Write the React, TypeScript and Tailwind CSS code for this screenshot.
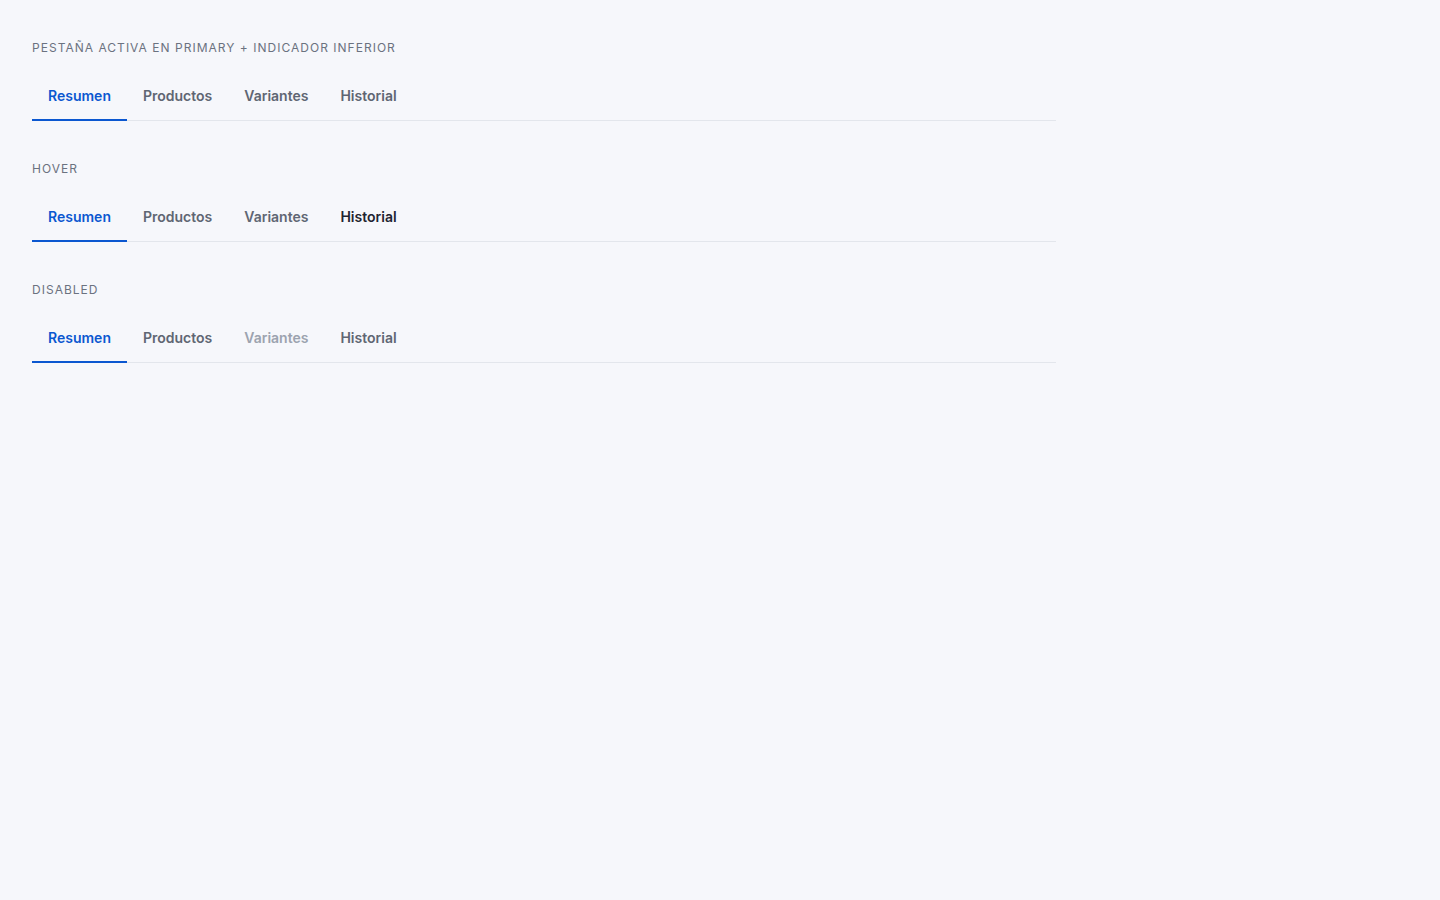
const tabs = ["Resumen", "Productos", "Variantes", "Historial"];

interface TabRowProps {
  label: string;
  hovered?: string;
  disabled?: string;
}

function TabRow({ label, hovered, disabled }: TabRowProps) {
  return (
    <section className="flex flex-col">
      <p className="mb-5 pt-px text-xs leading-4 tracking-[0.085em] uppercase text-[#6b7280]">
        {label}
      </p>
      <div className="flex border-b border-[#e3e6ec]">
        {tabs.map((tab, i) => {
          const active = i === 0;
          let color = "text-[#5f6673] border-transparent";
          if (active) color = "text-[#0b57d0] border-[#0b57d0]";
          else if (tab === hovered) color = "text-[#1f2430] border-transparent";
          else if (tab === disabled) color = "text-[#9ca3af] border-transparent";
          return (
            <button
              key={tab}
              disabled={tab === disabled}
              className={`-mb-px border-b-2 px-4 pt-[10px] pb-[13px] text-sm leading-5 font-semibold ${color}`}
            >
              {tab}
            </button>
          );
        })}
      </div>
    </section>
  );
}

export default function App() {
  return (
    <div
      className="min-h-screen bg-[#f6f7fb] px-8 pt-[39px]"
      style={{ fontFamily: "Inter, 'Noto Sans', sans-serif" }}
    >
      <div className="flex w-[1024px] flex-col gap-[39px]">
        <TabRow label="Pestaña activa en primary + indicador inferior" />
        <TabRow label="Hover" hovered="Historial" />
        <TabRow label="Disabled" disabled="Variantes" />
      </div>
    </div>
  );
}
